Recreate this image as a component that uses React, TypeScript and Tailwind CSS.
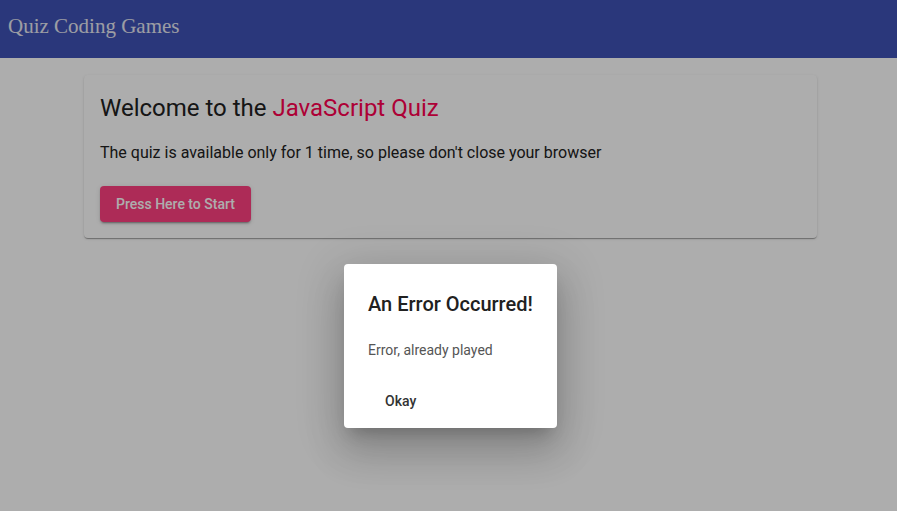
import React from "react";

export default function App() {
  return (
    <div className="relative w-[897px] h-[511px] overflow-hidden bg-white" style={{ fontFamily: "Roboto, 'Noto Sans', sans-serif" }}>
      <header className="h-[58px] bg-[#3f51b5] flex items-center px-[8px] pb-[5px]">
        <span className="text-[21px] text-[#e6e8f2]" style={{ fontFamily: "'Liberation Serif', serif" }}>
          Quiz Coding Games
        </span>
      </header>
      <main className="pt-[17px]">
        <div className="ml-[84px] w-[733px] rounded-[4px] bg-white p-[16px] shadow-[0_2px_1px_-1px_rgba(0,0,0,0.2),0_1px_1px_0_rgba(0,0,0,0.14),0_1px_3px_0_rgba(0,0,0,0.12)]">
          <h1 className="text-[24px] leading-[32px] text-[#212121] mb-[17px] mt-[1px]">
            Welcome to the <span className="text-[#ff0050]">JavaScript Quiz</span>
          </h1>
          <p className="text-[16px] leading-[24px] text-[#212121] mb-[21px]">
            The quiz is available only for 1 time, so please don't close your browser
          </p>
          <button className="h-[36px] px-[16px] rounded-[4px] bg-[#ff4081] text-white text-[14px] font-medium shadow-[0_3px_1px_-2px_rgba(0,0,0,0.2),0_2px_2px_0_rgba(0,0,0,0.14),0_1px_5px_0_rgba(0,0,0,0.12)]">
            Press Here to Start
          </button>
        </div>
      </main>
      <div className="absolute inset-0 bg-black/[0.32]" />
      <div className="absolute left-[344px] top-[264px] w-[213px] h-[164px] rounded-[4px] bg-white p-[24px] shadow-[0_11px_15px_-7px_rgba(0,0,0,0.2),0_24px_38px_3px_rgba(0,0,0,0.14),0_9px_46px_8px_rgba(0,0,0,0.12)]">
        <h2 className="text-[20px] leading-[32px] text-[#212121] mb-[20px]" style={{ fontWeight: 500 }}>An Error Occurred!</h2>
        <p className="text-[14px] leading-[20px] text-[#555]">Error, already played</p>
        <div className="mt-[23px]">
          <button className="h-[36px] px-[17px] text-[14px] font-medium text-[#333]">Okay</button>
        </div>
      </div>
    </div>
  );
}
